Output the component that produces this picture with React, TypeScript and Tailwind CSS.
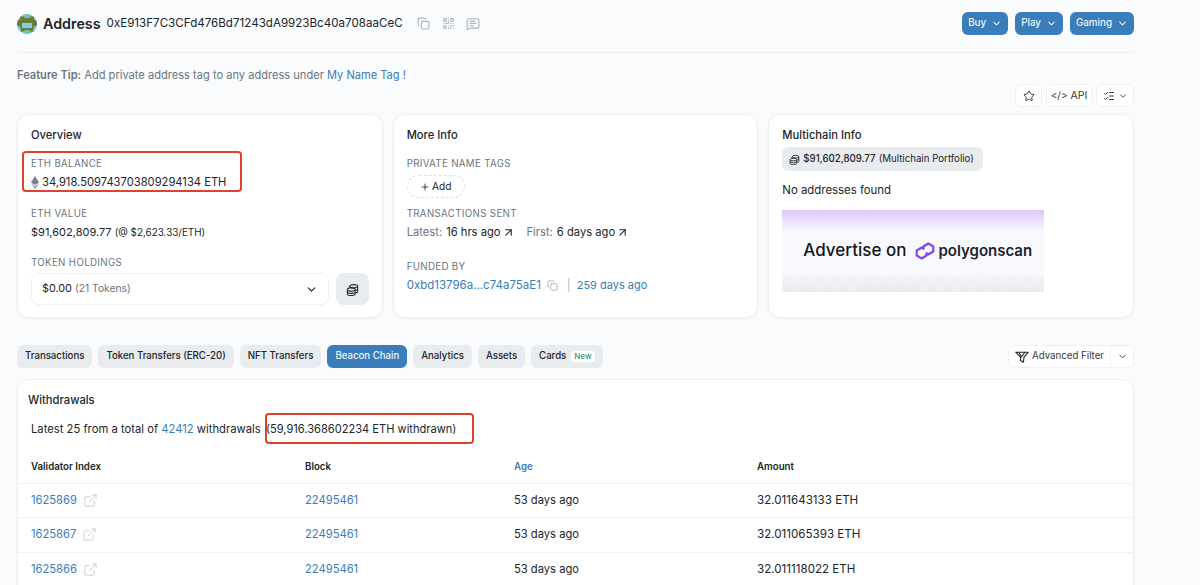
import { ArrowUpRight, ChevronDown, Copy, ExternalLink, ListChecks, MessageSquareText, Plus, QrCode, Star } from 'lucide-react';

const rows = [
  { index: '1625869', amount: '32.011643133 ETH' },
  { index: '1625867', amount: '32.011065393 ETH' },
  { index: '1625866', amount: '32.011118022 ETH' },
];

const tabs = ['Transactions', 'Token Transfers (ERC-20)', 'NFT Transfers', 'Beacon Chain', 'Analytics', 'Assets'];

function Avatar() {
  return (
    <svg width="20" height="20" viewBox="0 0 20 20" className="shrink-0">
      <clipPath id="av">
        <circle cx="10" cy="10" r="10" />
      </clipPath>
      <g clipPath="url(#av)">
        <rect width="20" height="20" fill="#6fc7c9" />
        <rect x="3" y="2.5" width="14" height="15" fill="#6f7a35" />
        <rect x="0" y="6" width="20" height="6" fill="#6f7a35" />
        <rect x="5" y="9" width="10" height="5" fill="#7fd0e6" />
        <rect x="7.5" y="0" width="5" height="4" fill="#6fc7c9" />
        <rect x="7.5" y="16" width="5" height="4" fill="#6fc7c9" />
        <rect x="0" y="14" width="4" height="6" fill="#6fc7c9" />
        <rect x="16" y="14" width="4" height="6" fill="#6fc7c9" />
      </g>
    </svg>
  );
}

function CoinStack({ size = 14 }: { size?: number }) {
  return (
    <svg width={size} height={size} viewBox="0 0 16 16" fill="none" stroke="#212529" strokeWidth="1.3" className="shrink-0">
      <ellipse cx="9.5" cy="4" rx="4.8" ry="2" />
      <path d="M14.3 4v6.5c0 .8-.8 1.4-2 1.8M4.7 4v2" />
      <path d="M14.3 7.3c0 .7-.8 1.3-2 1.7" />
      <ellipse cx="6.5" cy="8" rx="4.8" ry="2" fill="none" />
      <path d="M1.7 8v5.5c0 1.1 2.1 2 4.8 2s4.8-.9 4.8-2V8M1.7 10.8c0 1.1 2.1 2 4.8 2s4.8-.9 4.8-2" />
    </svg>
  );
}

function EthIcon() {
  return (
    <svg width="8" height="13" viewBox="0 0 8 13" className="shrink-0">
      <path d="M4 0 8 6.6 4 8.9 0 6.6Z" fill="#7b8088" />
      <path d="M4 10 8 7.6 4 13 0 7.6Z" fill="#9a9fa6" />
    </svg>
  );
}

function FilterIcon() {
  return (
    <svg width="14" height="12" viewBox="0 0 14 12" fill="none" stroke="#212529" strokeWidth="1.1" strokeLinejoin="round">
      <path d="M.7 1.2h12.6L9 6.2l-.6 5-2.8-1.6-.2-3.4Z" />
      <path d="M4 1.2 6.4 6 10 1.2" />
    </svg>
  );
}

function PolygonLogo() {
  return (
    <svg width="22" height="20" viewBox="0 0 22 20" fill="none" stroke="#8247e5" strokeWidth="2.2" strokeLinejoin="round">
      <path d="M9.5 8.5V5.5L14.3 2.5l5 3v5l-5 3-2.2-1.2" />
      <path d="M12.5 11.5v3l-4.8 3-5-3v-5l5-3 2.2 1.2" />
    </svg>
  );
}

function Label({ children }: { children: string }) {
  return <div className="text-[9.7px] leading-[14px] tracking-[0.35px] text-[#6c757d]">{children}</div>;
}

function Card({ title, children }: { title: string; children: React.ReactNode }) {
  return (
    <div className="h-[204px] rounded-xl border border-[#eef0f3] bg-white px-[13px] pt-[13px] shadow-[0_1px_3px_rgba(189,197,209,0.2)]">
      <h2 className="text-[11.2px] leading-[15px] font-medium text-[#212529]">{title}</h2>
      {children}
    </div>
  );
}

function TopButton({ label }: { label: string }) {
  return (
    <button className="flex h-[23px] items-center gap-[5px] rounded-md bg-[#3a7dbb] px-[6px] text-[9.8px] font-medium text-[#eef4fa]">
      {label}
      <ChevronDown size={11} strokeWidth={2.2} />
    </button>
  );
}

export default function App() {
  return (
    <div className="h-[585px] w-[1200px] overflow-hidden bg-[#fafbfd] [font-family:Inter,sans-serif] text-[#212529]">
      <div className="w-[1134px] pl-[17px] pt-[12px]">
        {/* Header */}
        <div className="flex h-[41px] items-start border-b border-[#eef0f3]">
          <div className="flex h-[23px] items-center">
            <Avatar />
            <h1 className="ml-[6px] text-[14.3px] font-semibold text-[#212529]">Address</h1>
            <span className="ml-[6px] text-[11.6px] text-[#212529]">0xE913F7C3CFd476Bd71243dA9923Bc40a708aaCeC</span>
            <Copy size={13} className="ml-[14px] text-[#adb5bd]" />
            <QrCode size={13} className="ml-[12px] text-[#adb5bd]" />
            <MessageSquareText size={14} className="ml-[11px] text-[#adb5bd]" />
          </div>
          <div className="ml-auto flex gap-[7px]">
            <TopButton label="Buy" />
            <TopButton label="Play" />
            <TopButton label="Gaming" />
          </div>
        </div>

        {/* Feature tip */}
        <p className="mt-[15px] text-[11.1px] leading-[15px] text-[#6c757d]">
          <span className="font-semibold">Feature Tip:</span> Add private address tag to any address under{' '}
          <span className="text-[#3a7dbb]">My Name Tag !</span>
        </p>

        <div className="mt-[1px] flex justify-end gap-1">
          <button className="flex h-[23px] w-[27px] items-center justify-center rounded-md border border-[#eef0f3] bg-white">
            <Star size={12} strokeWidth={1.8} />
          </button>
          <button className="flex h-[23px] w-[46px] items-center justify-center gap-[3px] rounded-md border border-[#eef0f3] bg-white text-[10.5px] text-[#343a40]">
            <span className="text-[10px]">&lt;/&gt;</span> API
          </button>
          <button className="flex h-[23px] w-[38px] items-center justify-center gap-[3px] rounded-md border border-[#eef0f3] bg-white text-[#343a40]">
            <ListChecks size={12} />
            <ChevronDown size={10} />
          </button>
        </div>

        {/* Cards */}
        <div className="mt-[7px] grid grid-cols-3 gap-[10px]">
          <Card title="Overview">
            <div className="relative mt-[14px]">
              <Label>ETH BALANCE</Label>
              <div className="mt-[3px] flex items-center gap-[3px] text-[11.2px] leading-[16px]">
                <EthIcon />
                <span>34,918.509743703809294134 ETH</span>
              </div>
              <div className="absolute -left-[9px] -top-[6px] h-[41px] w-[220px] rounded-[4px] border-2 border-[#d9432f]" />
            </div>
            <div className="mt-[17px]">
              <Label>ETH VALUE</Label>
              <div className="mt-[3px] text-[11px] leading-[17px]">
                $91,602,809.77 <span className="text-[9.9px]">(@ $2,623.33/ETH)</span>
              </div>
            </div>
            <div className="mt-[15px]">
              <Label>TOKEN HOLDINGS</Label>
              <div className="mt-[3px] flex gap-[7px]">
                <div className="flex h-[32px] flex-1 items-center justify-between rounded-lg border border-[#eef0f3] px-[10px] text-[10.8px]">
                  <span>
                    $0.00 <span className="text-[10.3px] text-[#6c757d]">(21 Tokens)</span>
                  </span>
                  <ChevronDown size={13} />
                </div>
                <div className="flex h-[32px] w-[33px] items-center justify-center rounded-lg bg-[#e9ecef]">
                  <CoinStack size={13} />
                </div>
              </div>
            </div>
          </Card>

          <Card title="More Info">
            <div className="mt-[14px]">
              <Label>PRIVATE NAME TAGS</Label>
              <button className="mt-[4px] flex h-[23px] w-[58px] items-center justify-center gap-[2px] rounded-full border border-dashed border-[#dee2e6] text-[10.2px]">
                <Plus size={10} />
                Add
              </button>
            </div>
            <div className="mt-[9px]">
              <Label>TRANSACTIONS SENT</Label>
              <div className="mt-[3px] flex items-center text-[11.2px] leading-[17px]">
                <span className="text-[#6c757d]">Latest:</span>
                <span className="ml-[4px]">16 hrs ago</span>
                <ArrowUpRight size={13} className="ml-[1px]" />
                <span className="ml-[12px] text-[#6c757d]">First:</span>
                <span className="ml-[4px]">6 days ago</span>
                <ArrowUpRight size={13} className="ml-[1px]" />
              </div>
            </div>
            <div className="mt-[19px]">
              <Label>FUNDED BY</Label>
              <div className="mt-[3px] flex items-center text-[11.5px] leading-[17px] text-[#3a7dbb]">
                <span>0xbd13796a...c74a75aE1</span>
                <Copy size={11} className="ml-[6px] text-[#adb5bd]" />
                <span className="ml-[9px] text-[#adb5bd]">|</span>
                <span className="ml-[6px] text-[11px]">259 days ago</span>
              </div>
            </div>
          </Card>

          <Card title="Multichain Info">
            <div className="mt-[4px] flex h-[24px] w-[201px] items-center gap-[3px] whitespace-nowrap rounded-md bg-[#e9ecef] px-[7px] text-[9.7px]">
              <CoinStack size={11} />
              <span className="font-medium">$91,602,809.77</span>
              <span>(Multichain Portfolio)</span>
            </div>
            <p className="mt-[12px] text-[11.4px] leading-[15px]">No addresses found</p>
            <div className="relative mt-[12px] flex h-[82px] w-[262px] items-center gap-[8px] bg-[linear-gradient(180deg,#dcc6fa_0%,#efe6fd_16%,#f8f9fc_28%,#f8f9fc_78%,#eff0f3_84%,#e8e9ec_100%)] pl-[21px]">
              <span className="text-[17px] font-medium text-[#14141c]">Advertise on</span>
              <span className="flex items-center gap-[2px]">
                <PolygonLogo />
                <span className="text-[15px] font-semibold text-[#1f1f33]">polygonscan</span>
              </span>
              <div className="absolute inset-x-0 bottom-0 h-[17px] bg-[repeating-linear-gradient(135deg,rgba(255,255,255,0.4)_0_1px,transparent_1px_3px)]" />
            </div>
          </Card>
        </div>

        {/* Tabs */}
        <div className="mt-[27px] flex h-[23px] items-center gap-[6px]">
          {tabs.map((tab) => (
            <button
              key={tab}
              className={
                tab === 'Beacon Chain'
                  ? 'flex h-[23px] items-center rounded-md bg-[#3a7dbb] px-2 text-[9.65px] font-medium text-[#eef4fa]'
                  : 'flex h-[23px] items-center rounded-md bg-[#e9ecef] px-2 text-[9.65px] font-medium text-[#212529]'
              }
            >
              {tab}
            </button>
          ))}
          <button className="flex h-[23px] items-center gap-[5px] rounded-md bg-[#e9ecef] px-2 text-[9.65px] font-medium">
            Cards
            <span className="rounded bg-white px-[3px] text-[8px] leading-[11px] font-medium text-[#3f9877]">New</span>
          </button>
          <div className="ml-auto flex h-[23px] items-center rounded-md border border-[#eef0f3] bg-white text-[9.7px] text-[#343a40]">
            <div className="flex h-full items-center gap-[3px] border-r border-[#eef0f3] px-[6px]">
              <FilterIcon />
              Advanced Filter
            </div>
            <div className="flex w-[22px] justify-center">
              <ChevronDown size={11} />
            </div>
          </div>
        </div>

        {/* Withdrawals table */}
        <div className="mt-[11px] h-[300px] rounded-xl border border-[#eef0f3] bg-white shadow-[0_1px_3px_rgba(189,197,209,0.2)]">
          <h2 className="pl-[10px] pt-[13px] text-[11.2px] leading-[15px] font-medium">Withdrawals</h2>
          <div className="relative mt-[13px] flex items-center pl-[13px] text-[11.25px] leading-[17px]">
            <span>Latest 25 from a total of&nbsp;</span>
            <span className="text-[#3a7dbb]">42412</span>
            <span>&nbsp;withdrawals&nbsp;</span>
            <span className="ml-[2px] text-[11.1px]">(59,916.368602234 ETH withdrawn)</span>
            <div className="absolute left-[247px] -top-[8px] h-[31px] w-[209px] rounded-[4px] border-2 border-[#d9432f]" />
          </div>
          <table className="mt-[15px] w-full table-fixed text-left text-[11.2px]">
            <colgroup>
              <col className="w-[287px]" />
              <col className="w-[209px]" />
              <col className="w-[243px]" />
              <col />
            </colgroup>
            <thead>
              <tr className="h-[30px] border-b border-[#eef0f3] text-[9.7px] font-semibold">
                <th className="pl-[13px] font-semibold">Validator Index</th>
                <th className="font-semibold">Block</th>
                <th className="font-semibold text-[#3a7dbb]">Age</th>
                <th className="font-semibold">Amount</th>
              </tr>
            </thead>
            <tbody>
              {rows.map((row) => (
                <tr key={row.index} className="h-[34.5px] border-b border-[#eef0f3]">
                  <td className="pl-[13px]">
                    <span className="flex items-center gap-[6px] text-[#3a7dbb]">
                      {row.index}
                      <ExternalLink size={15} strokeWidth={1.4} className="text-[#c4c8cc]" />
                    </span>
                  </td>
                  <td className="text-[#3a7dbb]">22495461</td>
                  <td>53 days ago</td>
                  <td className="text-[11.6px]">{row.amount}</td>
                </tr>
              ))}
            </tbody>
          </table>
        </div>
      </div>
    </div>
  );
}
